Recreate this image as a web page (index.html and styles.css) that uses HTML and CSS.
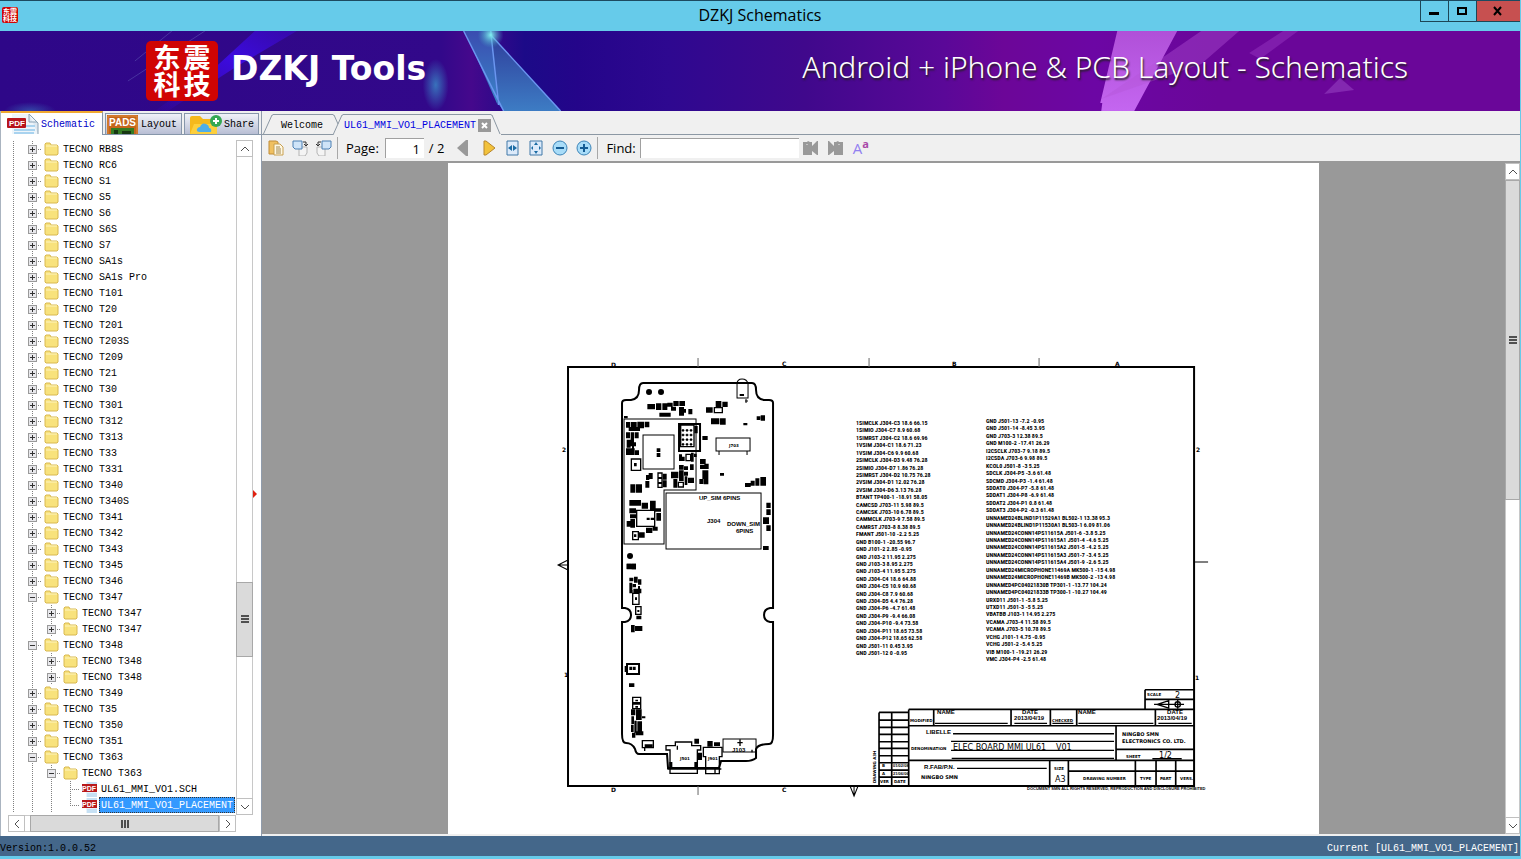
FILE: index.html
```html
<!DOCTYPE html>
<html lang="en">
<head>
    <meta charset="UTF-8">
    <meta name="viewport" content="width=device-width, initial-scale=1.0">
    <title>DZKJ Schematics</title>
    <link rel="stylesheet" href="styles.css">
</head>
<body>
    <header class="titlebar">
        <div class="app-icon"><span>东</span><span>震</span><span>科</span><span>技</span></div>
        <h1>DZKJ Schematics</h1>
        <div class="window-buttons">
            <button class="win-btn" aria-label="Minimize"><svg width="12" height="12"><path d="M1 7h10v3H1z"/></svg></button>
            <button class="win-btn" aria-label="Maximize"><svg width="12" height="12"><path d="M2 3h8v6H2z" fill="none" stroke="#000" stroke-width="2"/></svg></button>
            <button class="win-btn close" aria-label="Close"><svg width="12" height="12"><path d="M2 2l7 8M9 2l-7 8" stroke="#000" stroke-width="2"/></svg></button>
        </div>
    </header>

    <div class="banner">
        <svg class="banner-bg" viewBox="0 0 1521 80" preserveAspectRatio="none" aria-hidden="true">
            <defs>
                <linearGradient id="base">
                    <stop offset="0" stop-color="#2e0788"/>
                    <stop offset=".29" stop-color="#32088a"/>
                    <stop offset=".31" stop-color="#45088c"/>
                    <stop offset=".345" stop-color="#1c0a88"/>
                    <stop offset=".38" stop-color="#24058a"/>
                    <stop offset=".44" stop-color="#2e0890"/>
                    <stop offset=".53" stop-color="#40088c"/>
                    <stop offset=".62" stop-color="#5a0898"/>
                    <stop offset=".66" stop-color="#6c0698"/>
                    <stop offset=".72" stop-color="#6c06a4"/>
                    <stop offset=".8" stop-color="#6a0699"/>
                    <stop offset="1" stop-color="#6a0699"/>
                </linearGradient>
                <linearGradient id="beam" x1="0" y1="1" x2="1" y2="0">
                    <stop offset="0" stop-color="#3a0ad0" stop-opacity=".1"/>
                    <stop offset=".6" stop-color="#3c0be0"/>
                    <stop offset="1" stop-color="#3a0ac0" stop-opacity=".6"/>
                </linearGradient>
                <linearGradient id="shard" x1="0" y1="0" x2="0" y2="1">
                    <stop offset="0" stop-color="#3a4cb0"/>
                    <stop offset="1" stop-color="#3a86c8"/>
                </linearGradient>
                <linearGradient id="shard-dark" x1="0" y1="0" x2="0" y2="1">
                    <stop offset="0" stop-color="#2f3f9c"/>
                    <stop offset="1" stop-color="#3d7cc4"/>
                </linearGradient>
                <linearGradient id="pink" x1="0" y1="0" x2="0" y2="1">
                    <stop offset="0" stop-color="#b050d8"/>
                    <stop offset="1" stop-color="#c466f0"/>
                </linearGradient>
                <radialGradient id="glow"><stop offset="0" stop-color="#3a8cc8" stop-opacity=".8"/><stop offset="1" stop-color="#3a8cc8" stop-opacity="0"/></radialGradient>
                <radialGradient id="spark"><stop offset="0" stop-color="#80f0f0"/><stop offset="1" stop-color="#40a0c0" stop-opacity="0"/></radialGradient>
            </defs>
            <rect width="1521" height="80" fill="url(#base)"/>
            <path d="M155 80L218 34 255 0h42L236 36 168 80z" fill="url(#beam)"/>
            <path d="M128 50L205 0M135 30L172 0" stroke="#5a50b0" stroke-width="1" opacity=".6"/>
            <ellipse cx="30" cy="80" rx="26" ry="9" fill="url(#glow)" opacity=".6"/>
            <ellipse cx="436" cy="54" rx="13" ry="26" fill="url(#glow)"/>
            <path d="M465 0h27l6 74z" fill="url(#shard)"/>
            <path d="M491 5l70 75h-57l-6-8z" fill="url(#shard-dark)"/>
            <path d="M464 0l40 80M491 0l8 74M492 5l69 75" stroke="#6a96f0" stroke-width="1.5" fill="none"/>
            <circle cx="491" cy="4" r="13" fill="url(#spark)"/>
            <path d="M1118 0h60l-43 80h-33l1-8h-2z" fill="url(#pink)"/>
            <path d="M1102 68l100-35 38-33h-38l-32 22z" fill="#b455d8" opacity=".4"/>
            <path d="M1250 22l34-22h15l-38 28z" fill="#a040c8" opacity=".4"/>
            <path d="M1325 63l16-16 14 12z" fill="#9440c0" opacity=".6"/>
        </svg>
        <div class="logo"><span>东</span><span>震</span><span>科</span><span>技</span></div>
        <div class="brand">DZKJ Tools</div>
        <div class="slogan">Android + iPhone &amp; PCB Layout - Schematics</div>
    </div>

    <main class="workspace">
        <aside class="sidebar">
            <div class="side-tabs">
                <button class="side-tab active">
                    <svg width="32" height="20" viewBox="0 0 32 20">
                        <path d="M5 0h18l8 8v12H5z" fill="#eef5fa"/>
                        <path d="M22 0l9 9v11M22 0v8h8" fill="#dde8f0" stroke="#8ba3b5"/>
                        <path d="M16 12h12M7 16h21M7 19h20" stroke="#a9d3ef" stroke-width="2"/>
                        <rect y="4" width="19" height="10" rx="1" fill="#b8141c"/>
                        <text class="badge-text" x="2" y="12">PDF</text>
                    </svg>
                    Schematic
                </button>
                <button class="side-tab">
                    <svg width="31" height="19" viewBox="0 0 31 19">
                        <rect width="31" height="19" fill="#c4661c"/>
                        <path d="M1 19V1h29v18" fill="none" stroke="#e08c3c"/>
                        <path d="M4 13h23v6H4z" fill="#347c24"/>
                        <path d="M7 15h4v4H7zM15 16h9v3h-9z" fill="#173812"/>
                        <text class="pads-text" x="2" y="11">PADS</text>
                    </svg>
                    Layout
                </button>
                <button class="side-tab">
                    <svg width="32" height="19" viewBox="0 0 32 19">
                        <path d="M0 3q0-2 2-2h8l3 3h11q2 0 2 2v13H0z" fill="#f5b91c"/>
                        <path d="M0 19L4 9h23v10z" fill="#fdcf3c"/>
                        <path d="M10 17q-4 0-3-3 1-2 3-2 2-5 6-3 3 1 3 4 3 0 2 4z" fill="#50aee8"/>
                        <circle cx="26" cy="6" r="6" fill="#35a853"/>
                        <path d="M26 3v6M23 6h6" stroke="#fff" stroke-width="2"/>
                    </svg>
                    Share
                </button>
            </div>
            <div class="tree-panel">
                <div class="tree" id="tree"></div>
                <div class="scroll-v">
                    <button class="scroll-btn" aria-label="Scroll up"><svg width="10" height="8"><path d="M1 6l4-4 4 4"/></svg></button>
                    <div class="gap-before"></div>
                    <div class="thumb"><svg width="8" height="8"><path d="M0 1h8M0 4h8M0 7h8"/></svg></div>
                    <div class="gap-after"></div>
                    <button class="scroll-btn" aria-label="Scroll down"><svg width="10" height="8"><path d="M1 2l4 4 4-4"/></svg></button>
                </div>
                <div class="scroll-h">
                    <button class="scroll-btn" aria-label="Scroll left"><svg width="8" height="10"><path d="M6 1L2 5l4 4"/></svg></button>
                    <div class="thumb"><svg width="8" height="8"><path d="M1 0v8M4 0v8M7 0v8"/></svg></div>
                    <button class="scroll-btn" aria-label="Scroll right"><svg width="8" height="10"><path d="M2 1l4 4-4 4"/></svg></button>
                </div>
            </div>
            <div class="splitter"><svg width="4" height="8"><path d="M0 0l4 4-4 4z" fill="#e02010"/></svg></div>
        </aside>

        <section class="viewer">
            <nav class="doc-tabs">
                <a class="doc-tab" href="#">
                    <svg class="edge" width="11" height="21"><path d="M1 21L10 1h1"/></svg>
                    <span class="doc-name">Welcome</span>
                </a>
                <a class="doc-tab active" href="#">
                    <svg class="edge" width="10" height="21"><path d="M0 21L9 1h1"/><path d="M0 1h1l4 9"/></svg>
                    <span class="doc-name">UL61_MMI_VO1_PLACEMENT
                        <svg width="13" height="13"><rect width="13" height="13" fill="#999"/><path d="M4 4l5 5M9 4l-5 5" stroke="#fff" stroke-width="2"/></svg>
                    </span>
                    <svg class="edge" width="10" height="21"><path d="M0 1h1l8 19"/></svg>
                </a>
            </nav>

            <div class="toolbar">
                <button aria-label="Open"><svg width="16" height="16"><path d="M1 1h7l2 1v12H1z" fill="#f0c060" stroke="#c08c38"/><path d="M6 4h6l3 3v8H6z" fill="#fff8e4" stroke="#c8a050"/><path d="M8 7h4M8 9h5M8 11h5M8 13h5" stroke="#a08850"/></svg></button>
                <button aria-label="Rotate right"><svg width="16" height="16"><path d="M7 7h8v6l-2 3H7z" fill="#f4f4f4" stroke="#b4b4b4"/><path d="M1 1h9v8H3L1 7z" fill="#cfe4f8" stroke="#4c80b4"/><path d="M11 2h3v3M12 4l2 2 2-2" fill="none" stroke="#333"/></svg></button>
                <button aria-label="Rotate left"><svg width="16" height="16"><path d="M1 7h8v9H3l-2-3z" fill="#f4f4f4" stroke="#b4b4b4"/><path d="M6 1h9v6l-2 2H6z" fill="#cfe4f8" stroke="#4c80b4"/><path d="M5 2H2v3M0 4l2 2 2-2" fill="none" stroke="#333"/></svg></button>
                <span class="sep"></span>
                <label for="page">Page:</label>
                <input id="page" class="page-input" type="text" value="1">
                <span class="page-count">/ 2</span>
                <button class="nav-btn" aria-label="Previous page"><svg width="16" height="16"><path d="M13 0v16h-2L2 8l9-8z" fill="#999"/></svg></button>
                <button class="nav-btn" aria-label="Next page"><svg width="16" height="16"><path d="M3 1h2l9 7-9 7H3z" fill="#f2c23c" stroke="#b8862c"/></svg></button>
                <button aria-label="Fit width"><svg width="16" height="16"><path d="M3 1h11v14H3z" fill="#dceafa" stroke="#4078a8"/><path d="M4 8l4-3v6zM13 8L9 5v6z" fill="#1c6ca4"/></svg></button>
                <button aria-label="Fit page"><svg width="16" height="16"><path d="M2 1h12v14H2z" fill="#dceafa" stroke="#4078a8"/><path d="M8 2l2 3H6zM8 14l2-3H6zM3 8l2-2v4zM13 8l-2-2v4z" fill="#1c6ca4"/></svg></button>
                <button aria-label="Zoom out"><svg width="16" height="16"><circle cx="8" cy="8" r="7" fill="#a8dcf8" stroke="#3c84b8"/><path d="M4 8h8" stroke="#145c94" stroke-width="2"/></svg></button>
                <button aria-label="Zoom in"><svg width="16" height="16"><circle cx="8" cy="8" r="7" fill="#a8dcf8" stroke="#3c84b8"/><path d="M4 8h8M8 4v8" stroke="#145c94" stroke-width="2"/></svg></button>
                <span class="sep"></span>
                <label for="find">Find:</label>
                <input id="find" class="find-input" type="text">
                <button aria-label="Find previous"><svg width="16" height="16"><path d="M0 2h4l1-1 2 1h2v4l5-5h1v14h-1l-5-4v4H0z" fill="#999"/><path d="M4 4v1" stroke="#eee"/></svg></button>
                <button class="find-next" aria-label="Find next"><svg width="16" height="16"><path d="M15 2h-4l-1-1-2 1H6v4L1 1H0v14h1l5-4v4h9z" fill="#999"/><path d="M11 4v1" stroke="#eee"/></svg></button>
                <button class="match-case" aria-label="Match case">A<sup>a</sup></button>
            </div>

            <div class="document">
                <div class="canvas">
                    <svg class="page" viewBox="448 163 870 671">
                        <!-- drawing frame -->
                        <g class="line">
                            <path class="bold" d="M568 367h626v419H568z"/>
                            <path class="thin" d="M698 358v9M869 358v9M1039 358v9M698 786v9"/>
                            <path d="M568 560l-10 5 10 5M558 565h10M850 786l4 10 4-10M854 786v10M1194 562h14"/>
                        </g>
                        <g class="letter">
                            <text x="611" y="367">D</text><text x="782" y="366">C</text><text x="952" y="366">B</text><text x="1115" y="366">A</text>
                            <text x="611" y="792">D</text><text x="782" y="792">C</text>
                            <text x="562" y="452">2</text><text x="1196" y="452">2</text><text x="564" y="677">1</text><text x="1195" y="680">1</text>
                        </g>
                        <!-- board outline -->
                        <g class="line">
                            <path class="bold" d="M622 608V403q0-3 4-3h5q8-1 8-10 0-7 4-7h109q4 0 4 7 0 9 8 10h5q4 0 4 3v205h-3q-6 1-6 7t6 7h3v113q0 9-4 9-11 0-13 5v9q-4 3-10 3h-25l-2 7h-51l-1-14h-28q-3 0-4-5-3-6-9-6-4 0-4-9V622h3q6-1 6-7t-6-7z"/>
                            <path d="M624 419h72v71h-32v54h-40zM643 435h31v34h-31zM666 493h95v56h-95zM716 438h34v13h-34zM719 451v4M747 451v4M737 398v-14q0-5 5-5t6 5v14zM745 401h3M746 399v4M723 739h33v13h-33z"/>
                            <path class="bold" d="M679 424h21v27h-21zM627 664h12v10h-12z"/>
                        </g>
                        <circle cx="649" cy="392" r="3"/><circle cx="661" cy="392" r="3"/><circle cx="630" cy="556" r="3"/>
                        <g id="upper-parts" transform="translate(560 355) scale(.3333)"></g>
                        <g id="lower-parts" transform="translate(560 560) scale(.3333)">
                            <path class="part-line" d="M346 546h49v11h27v13h-10v70h-82v-70h-12v-13h28zM430 562h56v28h-8v51h-41v-51h-7zM322 627h162M465 627v14M540 538v20M532 548h16M254 563v10M352 557v12"/>
                        </g>
                        <g class="tiny">
                            <text x="699" y="500">UP_SIM 6PINS</text><text x="707" y="523">J304</text>
                            <text x="727" y="526">DOWN_SIM</text><text x="736" y="533">6PINS</text>
                            <text x="732" y="752">J103</text>
                        </g>
                        <g class="micro">
                            <text x="729" y="447">J703</text><text x="680" y="760">J501</text><text x="708" y="760">J901</text>
                        </g>
                        <g id="nets" class="nets"></g>
                        <!-- title block -->
                        <g transform="translate(865 680) scale(.3333)">
                            <path class="block-line" d="M131 88h858M131 88v227M131 137h858M131 241h858M753 137v104M753 208h236M840 29h149M840 29v59M840 58h149M206 88v49M438 88v49M556 88v49M635 88v49M871 88v49M554 241v74M610 241v74M610 273h379M811 241v74M873 241v74M932 241v74M42 97h89M42 120h89M42 142h89M42 163h89M42 185h89M42 205h89M42 227h89M42 248h89M42 270h89M42 291h89M42 97v218M80 97v218"/>
                            <path class="part-line" d="M210 130h218M448 130h98M562 130h63M640 130h225M880 130h100M264 161h483M258 184h489M258 211h489M260 235h487M276 265h269M862 236h88"/>
                            <path class="part-line" d="M877 73l34-11v22zM867 73h90M938 60v26"/><circle cx="938" cy="73" r="8" class="part-line"/>
                        </g>
                        <g class="tiny">
                            <text x="937" y="714">NAME</text><text x="1022" y="714">DATE</text><text x="1078" y="714">NAME</text><text x="1167" y="714">DATE</text>
                            <text x="1014" y="720">2013/04/19</text><text x="1157" y="720">2013/04/19</text>
                            <text x="926" y="734">LIBELLE</text>
                            <text x="924" y="769">R.FAB/P.N.</text>
                        </g>
                        <g class="micro">
                            <text x="910" y="722">MODIFIED</text><text x="1052" y="722">CHECKED</text><text x="911" y="750">DENOMINATION</text>
                            <text x="1147" y="696">SCALE</text><text x="1126" y="758">SHEET</text><text x="1054" y="770">SIZE</text>
                            <text x="1083" y="780">DRAWING NUMBER</text><text x="1140" y="780">TYPE</text><text x="1160" y="780">PART</text><text x="1180" y="780">VERS.</text>
                            <text x="882" y="767">B</text><text x="882" y="775">A</text><text x="880" y="783">VER</text><text x="894" y="783">DATE</text>
                            <text transform="translate(876 783) rotate(-90)">DRAWING A3H</text>
                        </g>
                        <g class="notice">
                            <text x="893" y="767">01/02/08</text><text x="893" y="775">21/06/06</text>
                            <text x="1027" y="790">DOCUMENT SMN ALL RIGHTS RESERVED, REPRODUCTION AND DISCLOSURE PROHIBITED</text>
                        </g>
                        <g class="company">
                            <text x="1122" y="736">NINGBO SMN</text><text x="1122" y="743">ELECTRONICS CO. LTD.</text><text x="921" y="779">NINGBO SMN</text>
                        </g>
                        <g class="value">
                            <text x="953" y="750">ELEC BOARD MMI UL61</text><text x="1056" y="750">V01</text><text x="1159" y="758">1/2</text>
                            <text x="1055" y="782">A3</text><text x="1175" y="698">2</text>
                        </g>
                    </svg>
                </div>
                <div class="scroll-v doc-scroll">
                    <button class="scroll-btn" aria-label="Page up"><svg width="10" height="8"><path d="M1 6l4-4 4 4"/></svg></button>
                    <div class="thumb"><svg width="8" height="8"><path d="M0 1h8M0 4h8M0 7h8"/></svg></div>
                    <div class="gap-after"></div>
                    <button class="scroll-btn" aria-label="Page down"><svg width="10" height="8"><path d="M1 2l4 4 4-4"/></svg></button>
                </div>
            </div>
        </section>
    </main>

    <footer class="statusbar">
        <span>Version:1.0.0.52</span>
        <span class="current">Current [UL61_MMI_VO1_PLACEMENT]</span>
    </footer>
    <script src="script.js"></script>
</body>
</html>
```
FILE: styles.css
```css
* {
    box-sizing: border-box;
}
body {
    margin: 0;
    height: 100vh;
    display: flex;
    flex-direction: column;
    overflow: hidden;
    font-family: "Liberation Mono", "Noto Sans CJK SC", monospace;
    font-size: 10px;
    color: #000;
    background-color: #f0f0f0;
    border-right: 1px solid #66cbea;
    border-bottom: 3px solid #66cbea;
}
button {
    font: inherit;
    color: inherit;
    padding: 0;
    border: none;
    background: none;
}
a {
    color: inherit;
    text-decoration: none;
}
svg {
    display: block;
    flex: none;
}

/* title bar */
.titlebar {
    display: flex;
    justify-content: space-between;
    flex: none;
    height: 31px;
    background-color: #66cbea;
    border-top: 1px solid #1c4a60;
}
.titlebar h1 {
    margin: 0;
    font: 16px/28px "Open Sans", "Noto Sans", sans-serif;
}
.app-icon,
.logo {
    display: grid;
    grid-template-columns: 1fr 1fr;
    place-items: center;
    background-color: #d00404;
    color: #fff;
    font-family: "Noto Sans CJK SC", sans-serif;
    font-weight: bold;
}
.app-icon {
    width: 16px;
    height: 16px;
    margin: 6px 82px 0 2px;
    padding: 1px;
    border-radius: 2px;
    font-size: 7px;
    line-height: 7px;
}
.window-buttons {
    display: flex;
}
.win-btn {
    display: flex;
    align-items: center;
    justify-content: center;
    width: 28px;
    height: 21px;
    border: 1px solid #1d4656;
    border-top: none;
    border-right: none;
}
.win-btn.close {
    width: 44px;
    background-color: #c75050;
}

/* banner */
.banner {
    position: relative;
    display: flex;
    align-items: center;
    flex: none;
    height: 80px;
    padding-right: 112px;
    color: #fff;
    background-color: #2e0788;
    font-family: "Noto Sans", sans-serif;
}
.banner-bg {
    position: absolute;
    top: 0;
    left: 0;
    width: 100%;
    height: 100%;
}
.logo {
    position: relative;
    width: 72px;
    height: 60px;
    margin-left: 146px;
    padding: 2px 6px 4px;
    border-radius: 5px;
    font-size: 27px;
    line-height: 27px;
}
.brand {
    position: relative;
    margin-left: 13px;
    padding-bottom: 4px;
    font: bold 33px/40px "DejaVu Sans", sans-serif;
}
.slogan {
    position: relative;
    margin-left: auto;
    padding-bottom: 10px;
    font-size: 30px;
    font-weight: 300;
    text-shadow: 1px 2px 2px #222;
}

/* main area */
.workspace {
    display: flex;
    flex: 1;
    min-height: 0;
}
.sidebar {
    display: grid;
    grid-template-columns: 1fr 8px;
    grid-template-rows: 24px 1fr;
    width: 262px;
    flex: none;
    border-left: 1px solid #aab4c0;
    border-right: 1px solid #909cac;
    background-color: #fff;
}
.side-tabs {
    grid-column: 1 / 3;
    display: flex;
    gap: 2px;
    align-items: flex-end;
    background-color: #f0f0f0;
    border-bottom: 1px solid #8696aa;
}
.side-tab {
    display: flex;
    align-items: center;
    gap: 3px;
    height: 21px;
    padding: 0 4px 0 1px;
    border: 1px solid #8696aa;
    border-bottom: none;
    background-image: linear-gradient(#f0f2f8, #b8bed4);
}
.side-tab:last-child {
    padding-left: 5px;
    gap: 2px;
}
.side-tab.active {
    height: 24px;
    margin-bottom: -1px;
    padding: 0 7px 0 6px;
    gap: 2px;
    color: #0000c8;
    background: #fff;
    border-left: none;
    border-top: 2px solid #f0a830;
}
.badge-text {
    fill: #fff;
    font: bold 8px "Liberation Sans", sans-serif;
}
.row .badge-text {
    font-size: 7px;
}
.pads-text {
    fill: #fff;
    font: bold 10px "Liberation Sans", sans-serif;
}
.tree-panel {
    display: grid;
    grid-template-columns: 1fr 17px;
    grid-template-rows: 1fr 17px;
    min-height: 0;
    padding: 5px 0 4px;
}
.tree {
    min-height: 0;
    overflow: hidden;
    padding: 1px 0 0 3px;
}
.row {
    display: flex;
    height: 16px;
    line-height: 18px;
    white-space: nowrap;
}
.cell {
    display: flex;
    align-items: center;
    justify-content: center;
    flex: none;
    width: 19px;
    height: 16px;
    background-repeat: no-repeat;
}
.guide {
    background-image: repeating-linear-gradient(#808080 0 1px, transparent 1px 2px);
    background-size: 1px 100%;
    background-position: 9px 0;
}
.branch {
    background-image: repeating-linear-gradient(#808080 0 1px, transparent 1px 2px), repeating-linear-gradient(90deg, #808080 0 1px, transparent 1px 2px);
    background-size: 1px 100%, 10px 1px;
    background-position: 9px 0, 9px 8px;
}
.branch.last {
    background-size: 1px 8px, 10px 1px;
}
.expander {
    width: 9px;
    height: 9px;
    border: 1px solid #9a9a9a;
    background-color: #e8e8ec;
}
.expander svg {
    width: 7px;
    height: 7px;
    fill: #333;
}
.label {
    padding: 0 2px;
}
.label.selected {
    padding: 0 1px;
    line-height: 16px;
    color: #fff;
    background-color: #3399ff;
    border: 1px dotted #333;
}
.scroll-btn,
.thumb {
    display: flex;
    align-items: center;
    justify-content: center;
    flex: none;
    background-color: #fff;
    border: 1px solid #c0c0c0;
}
.thumb {
    background-color: #dadada;
    border-color: #a8a8a8;
}
.scroll-btn path,
.thumb path {
    fill: none;
    stroke: #505050;
}
.thumb path {
    stroke-width: 2;
}
.scroll-v {
    display: flex;
    flex-direction: column;
    border: 1px solid #c8c8c8;
    border-width: 0 1px;
}
.scroll-v .scroll-btn {
    height: 17px;
    margin: 0 -1px;
}
.scroll-v .thumb {
    height: 75px;
    margin: 0 -1px;
}
.gap-before {
    flex: 3;
}
.gap-after {
    flex: 1;
}
.scroll-h {
    display: flex;
    margin-left: 7px;
    border: 1px solid #c8c8c8;
    border-width: 1px 0;
}
.scroll-h .scroll-btn {
    width: 17px;
    margin: -1px 0;
}
.scroll-h .thumb {
    flex: 1;
    margin: -1px 0 -1px 5px;
}
.splitter {
    display: flex;
    align-items: center;
    padding-top: 17px;
}

/* viewer */
.viewer {
    display: flex;
    flex-direction: column;
    flex: 1;
    min-width: 0;
    padding-bottom: 2px;
}
.doc-tabs {
    display: flex;
    align-items: flex-end;
    height: 24px;
    flex: none;
    border-bottom: 1px solid #8c98a4;
}
.doc-tab {
    display: flex;
    height: 21px;
    margin-bottom: -1px;
}
.edge path {
    fill: none;
    stroke: #8c98a4;
}
.doc-name {
    display: flex;
    align-items: center;
    gap: 2px;
    padding: 0 10px 0 8px;
    border-top: 1px solid #8c98a4;
}
.doc-tab.active {
    color: #0000e0;
    background-color: #f0f0f0;
}
.doc-tab.active .doc-name {
    padding: 0 0 0 1px;
}
.toolbar {
    display: flex;
    align-items: center;
    flex: none;
    gap: 8px;
    height: 28px;
    padding: 0 6px;
    border-bottom: 2px solid #999;
    font: 13px/18px "Open Sans", "Noto Sans", sans-serif;
}
.toolbar input {
    height: 20px;
    border: 1px solid #a0a0a0;
    border-right: none;
    border-bottom: none;
    background-color: #fff;
    font: inherit;
}
.sep {
    width: 1px;
    height: 22px;
    margin: 0 0 0 -3px;
    background-color: #a8a8a8;
}
.page-input {
    width: 39px;
    margin-left: -2px;
    padding: 0 4px;
    text-align: right;
}
.page-count {
    margin-left: -3px;
}
.nav-btn {
    margin: 0 -1px 0 3px;
}
.find-input {
    width: 159px;
    margin: 0 -4px;
}
.find-next {
    margin: 0 1px;
}
.match-case {
    color: #9280f0;
    font-size: 15px;
}
.match-case sup {
    color: #a848a8;
    font-size: 11px;
    font-weight: bold;
    line-height: 0;
}
.document {
    display: flex;
    flex: 1;
    min-height: 0;
    background-color: #999;
}
.canvas {
    flex: 1;
    min-width: 0;
    overflow: hidden;
}
.page {
    width: 70%;
    margin: 0 auto;
    background-color: #fff;
}
.doc-scroll {
    width: 15px;
    background-color: #fff;
}
.doc-scroll .thumb {
    height: auto;
    flex: 1;
}

/* drawing */
.line {
    fill: none;
    stroke: #000;
    stroke-width: 1;
}
.bold {
    stroke-width: 2;
}
.thin {
    stroke: #666;
}
.part-line {
    fill: none;
    stroke: #000;
    stroke-width: 4;
}
.block-line {
    fill: none;
    stroke: #000;
    stroke-width: 5;
}
.letter,
.micro,
.company,
.value {
    font-family: "DejaVu Sans", sans-serif;
}
.letter {
    font-size: 6px;
    font-weight: bold;
}
.tiny {
    font: bold 6px "Liberation Sans", sans-serif;
}
.micro {
    font-size: 4px;
    font-weight: bold;
}
.notice {
    font: bold 4px "Liberation Sans", sans-serif;
}
.company {
    font-size: 5px;
    font-weight: bold;
}
.value {
    font-size: 8px;
}
.nets {
    font: bold 6px "Liberation Sans Narrow", "Roboto Condensed", "DejaVu Sans Condensed", sans-serif;
}

/* status bar */
.statusbar {
    display: flex;
    justify-content: space-between;
    align-items: flex-end;
    flex: none;
    height: 20px;
    padding: 0 1px 0 0;
    background-color: #44678a;
    line-height: 14px;
}
.current {
    color: #fff;
}
```
FILE: script.js
```js
const names = ['RB8S', 'RC6', 'S1', 'S5', 'S6', 'S6S', 'S7', 'SA1s', 'SA1s Pro', 'T101', 'T20', 'T201', 'T203S', 'T209',
    'T21', 'T30', 'T301', 'T312', 'T313', 'T33', 'T331', 'T340', 'T340S', 'T341', 'T342', 'T343', 'T345', 'T346',
    'T347', 'T348', 'T349', 'T35', 'T350', 'T351', 'T363'];
const children = { T347: 2, T348: 2, T363: 1 };

const folder = '<svg width="15" height="14"><path d="M1 2l1-1h4l1 2h6l1 1v8l-1 1H2l-1-1z" fill="#f8e27c" stroke="#d8b850"/><path d="M2 4h11" stroke="#fdf4c0"/></svg>';
const pdf = '<svg width="17" height="16"><path d="M5 1h11v15H5z" fill="#e8f2fa"/><path d="M6 2h10M6 13h10M6 15h10" stroke="#a4cfee"/><rect x="1" y="3" width="15" height="8" fill="#b8181c"/><text class="badge-text" x="1" y="10">PDF</text></svg>';

function expander(open) {
    return `<button class="expander" aria-label="Toggle"><svg><path d="M1 3h5v1H1z${open ? '' : 'M3 1h1v5H3z'}"/></svg></button>`;
}

function row(level, open, text) {
    let guides = '<span class="cell guide"></span>'.repeat(level);
    return `<div class="row">${guides}<span class="cell branch">${expander(open)}</span><span class="cell">${folder}</span><a class="label" href="#">${text}</a></div>`;
}

function fileRow(text, selected) {
    let guides = '<span class="cell guide"></span>'.repeat(3);
    return `<div class="row">${guides}<span class="cell branch ${selected ? 'last' : ''}"></span><span class="cell">${pdf}</span><a class="label ${selected ? 'selected' : ''}" href="#">${text}</a></div>`;
}

let html = '';
names.forEach(name => {
    let count = children[name] || 0;
    html += row(1, count > 0, 'TECNO ' + name);
    for (let i = 0; i < count; i++) {
        html += row(2, name === 'T363', 'TECNO ' + name);
    }
});
html += fileRow('UL61_MMI_VO1.SCH', false);
html += fileRow('UL61_MMI_VO1_PLACEMENT', true);
document.getElementById('tree').innerHTML = html;

// board components: x1 y1 x2 y2, three units to a pixel
const upperSolid = `262 147 285 163,288 145 304 165,307 145 322 165,322 143 338 155,340 138 356 153,358 138 375 153,333 155 348 167,357 156 372 182,372 162 378 173,385 162 397 178,298 173 332 185,192 183 203 190,
467 138 484 156,487 140 503 156,438 157 458 173,453 190 478 208,480 190 497 209,590 184 601 195,602 181 615 197,550 204 562 211,427 243 443 255,
198 201 210 218,212 201 230 228,232 200 252 220,254 200 268 217,206 216 240 228,198 232 210 250,212 232 222 262,224 232 236 250,200 254 212 278,212 262 228 274,198 280 224 300,216 270 222 290,225 286 237 300,
290 280 301 291,290 294 301 306,403 213 413 235,222 324 230 334,357 298 366 318,366 305 374 318,393 293 401 320,402 296 410 306,357 330 371 344,372 334 384 345,390 328 401 345,
420 312 437 328,420 330 434 342,433 326 446 342,427 346 445 372,418 372 430 387,431 372 445 388,480 354 492 362,333 350 355 370,357 346 371 378,372 350 384 362,374 364 382 390,340 372 352 398,384 368 402 384,
258 360 268 375,266 354 278 372,256 378 268 398,308 356 320 374,308 376 320 397,211 388 226 413,228 388 246 413,208 435 243 452,245 443 264 461,270 437 287 466,208 460 228 475,210 478 228 490,200 498 212 515,211 492 225 518,282 460 303 470,289 474 303 497,260 488 269 495,272 488 283 495,258 518 277 534,278 515 293 527,237 532 254 548,222 538 229 546,
555 384 572 396,572 377 584 392,586 370 598 392,601 366 618 392,619 443 632 459,619 463 632 480,609 487 627 507,619 511 632 528,609 573 626 585,200 626 228 643,539 117 552 123`;
const upperOutline = `463 158 487 173,214 312 242 346,378 298 392 317,294 354 306 368,294 370 306 383,294 385 306 397,355 382 370 396,230 466 284 514,218 530 235 554,362 210 402 275`;
const lowerSolid = `200 11 214 27,215 11 228 28,208 53 220 64,222 50 233 68,234 58 244 74,208 68 217 90,218 72 228 82,220 86 244 100,208 90 218 100,234 78 240 90,225 112 231 120,232 150 238 156,229 167 244 178,213 195 224 217,225 198 247 213,
194 318 200 336,208 320 216 330,218 320 227 330,207 370 223 381,226 419 234 424,226 438 234 443,213 448 226 466,228 448 245 480,214 469 222 492,223 482 230 518,213 494 221 516,232 484 246 518,246 469 256 475,216 518 226 533,227 514 250 526,
254 553 278 561,403 536 417 551,414 578 426 600,442 543 458 560,462 547 480 558,328 606 337 626,403 606 412 626,574 569 578 577`;
const lowerOutline = `218 100 237 133,227 140 243 163,218 412 242 428,218 432 242 446,247 542 280 563`;

function rects(list) {
    return list.split(',').map(item => {
        let [x1, y1, x2, y2] = item.trim().split(' ').map(Number);
        return `M${x1} ${y1}H${x2}V${y2}H${x1}z`;
    }).join('');
}

function pins() {
    let d = '';
    for (let y = 222; y < 275; y += 14) {
        for (let x = 365; x < 400; x += 12) {
            d += `M${x} ${y + 4}h8M${x + 4} ${y}v8`;
        }
    }
    return `<path class="part-line" d="${d}"/>`;
}

document.getElementById('upper-parts').innerHTML = `<path d="${rects(upperSolid)}"/><path class="part-line" d="${rects(upperOutline)}"/>${pins()}`;
document.getElementById('lower-parts').innerHTML += `<path d="${rects(lowerSolid)}"/><path class="part-line" d="${rects(lowerOutline)}"/>`;

const leftNets = ['1SIMCLK J304-C3 18.6 66.15', '1SIMIO J304-C7 8.9 60.68', '1SIMRST J304-C2 18.6 69.96', '1VSIM J304-C1 18.6 71.23',
    '1VSIM J304-C6 9.9 60.68', '2SIMCLK J304-D3 9.48 76.28', '2SIMIO J304-D7 1.86 76.28', '2SIMRST J304-D2 10.75 76.28',
    '2VSIM J304-D1 12.02 76.28', '2VSIM J304-D6 3.13 76.28', 'BTANT TP400-1 -18.91 58.05', 'CAMCSD J703-11 5.98 89.5',
    'CAMCSK J703-10 6.78 89.5', 'CAMMCLK J703-9 7.58 89.5', 'CAMRST J703-8 8.38 89.5', 'FMANT J501-10 -2.2 5.25',
    'GND B100-1 -20.55 96.7', 'GND J101-2 2.85 -0.95', 'GND J103-2 11.95 2.275', 'GND J103-3 8.95 2.275',
    'GND J103-4 11.95 5.275', 'GND J304-C4 18.6 64.88', 'GND J304-C5 10.9 60.68', 'GND J304-C8 7.9 60.68',
    'GND J304-D5 4.4 76.28', 'GND J304-P6 -4.7 61.48', 'GND J304-P9 -9.4 66.08', 'GND J304-P10 -9.4 73.58',
    'GND J304-P11 18.65 73.58', 'GND J304-P12 18.65 62.58', 'GND J501-11 0.45 3.95', 'GND J501-12 0 -0.95'];
const rightNets = ['GND J501-13 -7.2 -0.95', 'GND J501-14 -8.45 3.95', 'GND J703-3 12.38 89.5', 'GND M100-2 -17.41 26.29',
    'I2CSCLK J703-7 9.18 89.5', 'I2CSDA J703-6 9.98 89.5', 'KCOL0 J501-8 -3 5.25', 'SDCLK J304-P5 -3.6 61.48',
    'SDCMD J304-P3 -1.4 61.48', 'SDDAT0 J304-P7 -5.8 61.48', 'SDDAT1 J304-P8 -6.9 61.48', 'SDDAT2 J304-P1 0.8 61.48',
    'SDDAT3 J304-P2 -0.3 61.48', 'UNNAMED24BLIND1P11529A1 BL502-1 13.38 95.3', 'UNNAMED24BLIND1P11530A1 BL503-1 6.09 81.06',
    'UNNAMED24CONN14PS11615A J501-6 -3.8 5.25', 'UNNAMED24CONN14PS11615A1 J501-4 -4.6 5.25',
    'UNNAMED24CONN14PS11615A2 J501-5 -4.2 5.25', 'UNNAMED24CONN14PS11615A3 J501-7 -3.4 5.25',
    'UNNAMED24CONN14PS11615A4 J501-9 -2.6 5.25', 'UNNAMED24MICROPHONE11469A MK500-1 -15 4.98',
    'UNNAMED24MICROPHONE11469B MK500-2 -13 4.98', 'UNNAMED4PC04021830B TP301-1 -13.77 104.24',
    'UNNAMED4PC04021833B TP300-1 -10.27 104.49', 'URXD11 J501-1 -5.8 5.25', 'UTXD11 J501-3 -5 5.25',
    'VBATBB J103-1 14.95 2.275', 'VCAMA J703-4 11.58 89.5', 'VCAMA J703-5 10.78 89.5', 'VCHG J101-1 4.75 -0.95',
    'VCHG J501-2 -5.4 5.25', 'VIB M100-1 -19.21 26.29', 'VMC J304-P4 -2.5 61.48'];

// spread the rows of one list evenly between two baselines
function column(list, x, top, bottom) {
    return list.map((text, i) => {
        let y = Math.round(top + i * (bottom - top) / (list.length - 1));
        return `<text x="${x}" y="${y}">${text}</text>`;
    }).join('');
}
document.getElementById('nets').innerHTML = column(leftNets, 856, 425, 655) + column(rightNets, 986, 423, 661);
```
